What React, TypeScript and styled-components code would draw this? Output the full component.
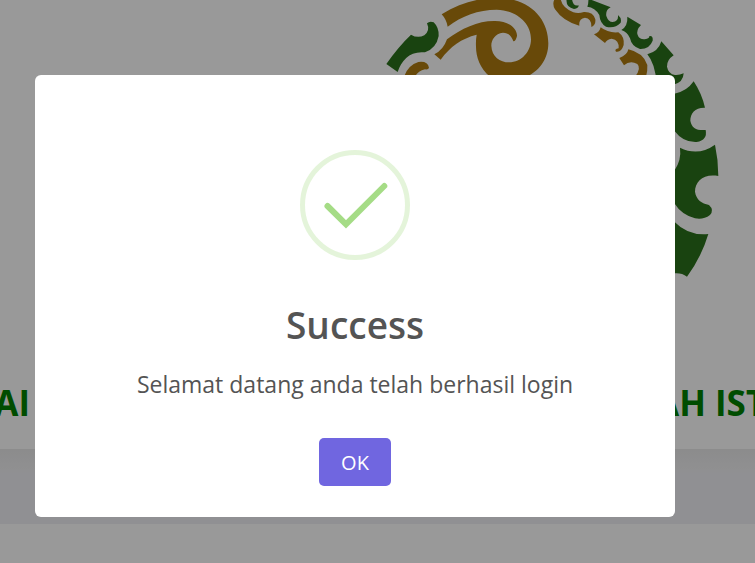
import React from "react";
import styled, { createGlobalStyle } from "styled-components";

const GlobalStyle = createGlobalStyle`
  *, *::before, *::after { box-sizing: border-box; }
  body {
    margin: 0;
    overflow: hidden;
    background: #ffffff;
    font-family: "Open Sans", sans-serif;
  }
`;

const Page = styled.main`
  min-height: 100vh;
  overflow: hidden;
`;

const Banner = styled.header`
  display: flex;
  justify-content: flex-end;
  padding-right: 30px;
`;

const Emblem = styled.svg`
  display: block;
  width: 345px;
  height: 290px;
`;

const SchoolName = styled.h1`
  display: flex;
  justify-content: space-between;
  margin: 0;
  padding: 89px 0 22px;
  font-size: 35px;
  font-weight: 700;
  line-height: 48px;
  color: #008000;
`;

const NamePart = styled.span<{ $end?: boolean }>`
  display: flex;
  flex: none;
  justify-content: ${(p) => (p.$end ? "flex-end" : "flex-start")};
  width: ${(p) => (p.$end ? "30px" : "100px")};
  white-space: nowrap;
`;

const Band = styled.div`
  height: 75px;
  background: linear-gradient(#e9e9ea, #f0f0f2 20px, #f0f1f5 24px);
`;

const Backdrop = styled.div`
  position: fixed;
  inset: 0;
  display: flex;
  align-items: flex-start;
  justify-content: center;
  padding: 75px 45px 0 0;
  background: rgba(0, 0, 0, 0.4);
`;

const Dialog = styled.section`
  display: flex;
  flex-direction: column;
  align-items: center;
  width: 640px;
  max-width: 100%;
  padding: 75px 25px 31px;
  border-radius: 6px;
  background: #ffffff;
  color: #545454;
  text-align: center;
`;

const SuccessIcon = styled.svg`
  width: 110px;
  height: 110px;
`;

const Title = styled.h2`
  margin: 40px 0 0;
  font-size: 37px;
  font-weight: 600;
  line-height: 50px;
`;

const Message = styled.p`
  margin: 18px 0 0;
  font-size: 23px;
  font-weight: 400;
  line-height: 32px;
`;

const ConfirmButton = styled.button`
  height: 48px;
  margin-top: 38px;
  padding: 1px 22px 0;
  border: 0;
  border-radius: 5px;
  background: #7066e0;
  color: #ffffff;
  font: 400 20px/48px "Open Sans", sans-serif;
  cursor: pointer;
`;

function SchoolEmblem() {
  return (
    <Emblem viewBox="380 0 345 290" aria-hidden="true">
      <g transform="translate(375 0) scale(0.33333)">
        <path
          fill="#2b711b"
          d="M34 192Q70 140 108 104Q128 116 148 106Q166 92 156 70Q164 62 176 67Q192 82 191 108Q184 145 150 157C105 152 80 180 68 216Z"
        />
        <g fill="#ad7b10">
          <path d="M200 43C260 5 320-8 380-6C470 0 520 60 520 130C520 180 490 215 455 230L345 230C315 205 303 170 303 140Q302 120 305 104C260 115 225 140 197 179L178 163Q205 150 216 118C260 85 310 62 360 63C400 63 427 85 426 108Q422 125 415 124C410 108 400 98 384 98C360 100 349 120 349 137C350 170 375 187 402 187C440 187 468 155 468 118C468 65 420 30 365 29C310 29 260 48 218 80Q214 58 200 43Z" />
          <path d="M88 228Q100 195 130 186Q158 182 162 203Q160 210 150 208Q130 212 120 230Z" />
        </g>
      </g>
      <g transform="translate(540 0) scale(0.33333)">
        <g fill="#ad7b10">
          <path d="M45-4Q35 10 45 28Q70 65 118 77Q116 55 135 53Q155 55 154 81Q168 75 166 58Q160 35 132 36Q115 42 100 37Q65 22 62-4Z" />
          <path d="M182 82Q205 100 235 97Q254 110 251 135Q244 158 228 155Q222 148 236 145Q238 120 215 116Q200 118 195 129L162 103Q178 98 182 82Z" />
          <path d="M265 148Q310 158 322 195Q323 215 318 230L285 230Q305 205 292 192Q270 180 252 196L238 174Q262 165 265 148Z" />
        </g>
        <g fill="#2b711b">
          <path d="M80-4Q76 22 102 27Q116 26 116 16Q98 20 96-4Z" />
          <path d="M145-4L212 22Q196 30 199 48Q205 66 218 66Q236 64 234 45Q246 55 242 68Q225 86 198 80Q180 70 178 45Q165 22 142 20Q146 10 145-4Z" />
          <path d="M262 50L303 75Q288 90 293 105Q298 119 314 118Q330 115 328 108Q340 106 338 122Q328 148 300 147Q275 140 270 115Q262 95 244 90Q264 78 262 50Z" />
          <path d="M364 124L401 166Q380 180 381 200Q385 222 405 225Q418 226 431 220Q430 248 400 254L350 250Q345 190 322 163Q355 155 364 124Z" />
        </g>
      </g>
      <g transform="translate(665 60) scale(0.33333)" fill="#2b711b">
        <path d="M86 64Q110 100 120 143C90 142 76 160 76 182C80 205 95 212 122 210Q128 240 95 246Q55 248 28 212L28 101Q65 95 86 64Z" />
        <path d="M45 263Q100 290 150 254Q160 300 160 348C115 340 90 365 90 395C94 420 110 430 132 435Q148 450 135 465Q115 480 90 475Q50 465 28 430L28 332Q50 300 45 263Z" />
        <path d="M28 485Q70 528 130 522Q110 590 66 650Q50 638 28 640Z" />
      </g>
    </Emblem>
  );
}

export default function App() {
  return (
    <>
      <GlobalStyle />
      <Page>
        <Banner>
          <SchoolEmblem />
        </Banner>
        <SchoolName>
          <NamePart $end>AI</NamePart>
          <NamePart>AH IST</NamePart>
        </SchoolName>
        <Band />
      </Page>
      <Backdrop>
        <Dialog role="dialog" aria-modal="true" aria-labelledby="dialog-title" aria-describedby="dialog-message">
          <SuccessIcon viewBox="0 0 110 110" fill="none" aria-hidden="true">
            <circle cx="55" cy="55" r="52.5" stroke="#a5dc86" strokeOpacity="0.3" strokeWidth="5" />
            <path d="M27.5 56L46 74.3L84.3 36" stroke="#a5dc86" strokeWidth="6" strokeLinecap="round" />
          </SuccessIcon>
          <Title id="dialog-title">Success</Title>
          <Message id="dialog-message">Selamat datang anda telah berhasil login</Message>
          <ConfirmButton type="button">OK</ConfirmButton>
        </Dialog>
      </Backdrop>
    </>
  );
}
